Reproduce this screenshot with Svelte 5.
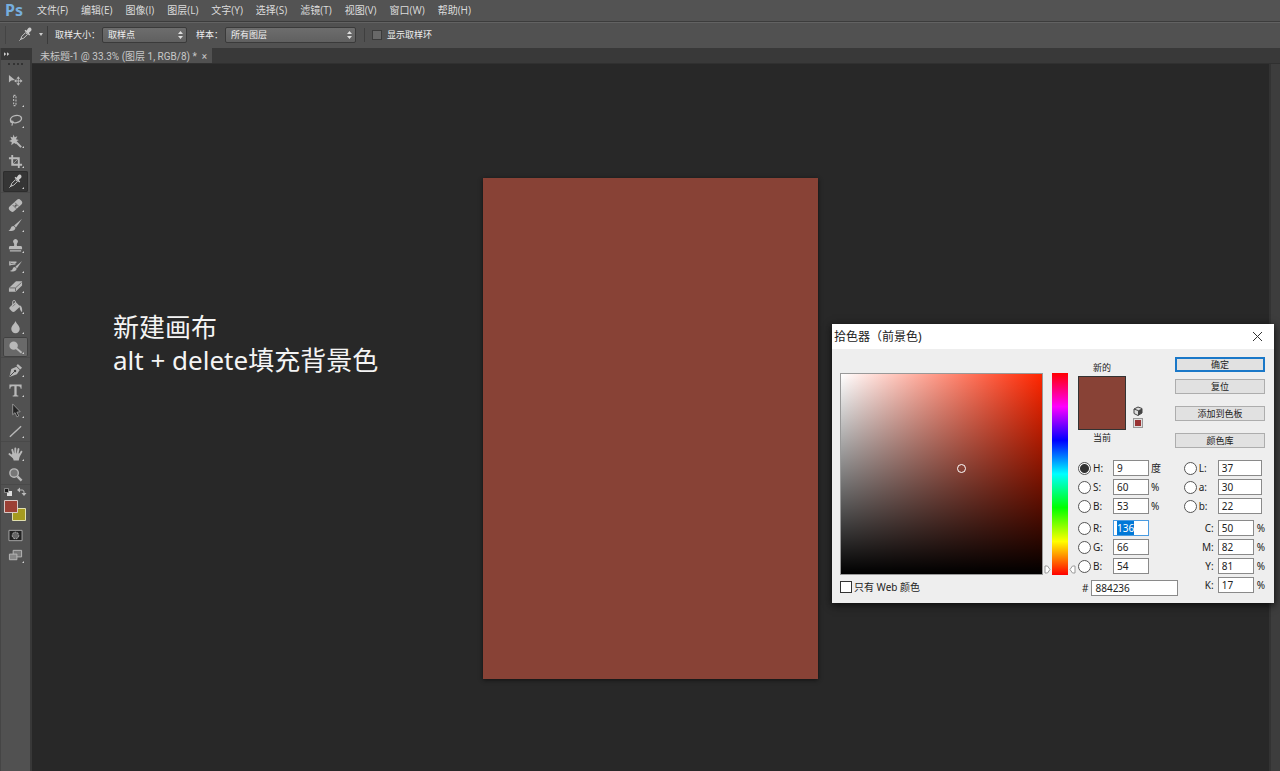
<script lang="ts">
import { onMount } from "svelte";

interface Tool {
    name: string;
    icon: string;
    more?: boolean;
    state?: "active" | "raised";
}

interface Channel {
    label: string;
    value: string;
    unit?: string;
    radio?: boolean;
}

const menus = [
    "文件(F)",
    "编辑(E)",
    "图像(I)",
    "图层(L)",
    "文字(Y)",
    "选择(S)",
    "滤镜(T)",
    "视图(V)",
    "窗口(W)",
    "帮助(H)",
];

const dropper =
    '<path d="M3 13l1-3 4-4 2 2-4 4z" fill="none" stroke="currentColor"/><path d="M1.500 14.500l2-2" stroke="currentColor"/><path d="M7 4l5 5 1-1-1.500-1.500 2.300-2.300c1-1 .7-2.500-.2-3.200-.8-.6-2-.5-2.700.3L9 4 8 3z"/>';

const groups: Tool[][] = [
    [
        {
            name: "移动工具",
            icon: '<path d="M1 2v8l2.500-2 4-.5z"/><path d="M11 5v7M7.500 8.500h7" stroke="currentColor"/><path d="M11 3.500l2 2.500H9zM11 13.500l2-2.500H9zM6.500 8.500L9 6.500v4zM15.500 8.500L13 6.500v4z"/>',
        },
        {
            name: "选框工具",
            more: true,
            icon: '<path d="M6 2.500h2.500v11H6z" fill="none" stroke="currentColor" stroke-width="1.200" stroke-dasharray="2 1.500"/>',
        },
        {
            name: "套索工具",
            more: true,
            icon: '<ellipse cx="8.500" cy="6.500" rx="6" ry="3.800" fill="none" stroke="currentColor" stroke-width="1.500" transform="rotate(-12 8.500 6.500)"/><path d="M3.500 8c-1.500 1-.5 2.500 1 2s1-1.500 0-1.500M4.500 10.500c.5 1 .5 1.500-.5 3" fill="none" stroke="currentColor" stroke-width="1.200"/>',
        },
        {
            name: "魔棒工具",
            more: true,
            icon: '<path d="M7 7l7 7" stroke="currentColor" stroke-width="2.200"/><path d="M6 .5l1 3 3-1-1.500 3 3 1-3 1.500.5 3-2.500-1.500L3.500 12l.5-3.500-3-1L4 6 2.500 3l2.500.8z"/>',
        },
        {
            name: "裁剪工具",
            more: true,
            icon: '<path d="M4.500 1v10.500H15M1 4.500h10.500V15" fill="none" stroke="currentColor" stroke-width="2"/><path d="M5 11l6-6" stroke="currentColor" stroke-width=".7"/>',
        },
        { name: "吸管工具", more: true, state: "active", icon: dropper },
    ],
    [
        {
            name: "修复画笔",
            more: true,
            icon: '<rect x="0" y="4.500" width="16" height="7" rx="3" transform="rotate(-42 8 8)"/><path d="M5 7.500l4 4M7.500 5l4 4" stroke="#666"/><path d="M8.200 7v2.500M7 8.200h2.500" stroke="#555"/>',
        },
        {
            name: "画笔工具",
            more: true,
            icon: '<path d="M15 .8L6.500 8l2 2.200z"/><path d="M6 8.500c-2 0-2.500 1-3 2.200C2.500 12.500 1.500 13 .5 13.500c3.500 1 7 .5 7.500-3z"/>',
        },
        {
            name: "仿制图章",
            more: true,
            icon: '<path d="M8 1a2.700 2.700 0 0 0-2 4.400c.6.800.8 1.600.4 3.100H3c-1 0-2 .5-2 1.500V12h14v-2c0-1-1-1.500-2-1.500H9.600c-.4-1.500-.2-2.300.4-3.100A2.700 2.700 0 0 0 8 1zM2 13h12v1.500H2z"/>',
        },
        {
            name: "历史记录画笔",
            more: true,
            icon: '<path d="M15 2L8 8l1.500 2z"/><path d="M7.500 8.500c-2 0-2 1-2.500 2-.5 1.500-1.500 2-3 2.200 3.500 1.300 6.500.8 7.300-2.200z"/><path d="M3 3.500h6M2 6l6-1M2 2.500v4.500" fill="none" stroke="currentColor" stroke-width="1.500"/>',
        },
        {
            name: "橡皮擦",
            more: true,
            icon: '<path d="M1 9.500L8.500 2.500H15V7l-7 6.500H1z"/><path d="M1.500 9.500H8V13M8 9.500L14.500 3.500" fill="none" stroke="#666"/>',
        },
        {
            name: "油漆桶",
            more: true,
            icon: '<path d="M2 8.500L8 3l5 5-5.500 5c-1 1-2.500 1-3.500 0l-2-2c-.8-.8-.7-1.800 0-2.500z"/><path d="M5 7V3c0-2 3-2 3 0v4" fill="none" stroke="currentColor"/><path d="M12 7c2 0 3.500 2 3 7-2-1-2.500-4-3-7z"/><path d="M5 8l3-3" stroke="#777"/>',
        },
        {
            name: "模糊工具",
            more: true,
            icon: '<path d="M8 1c1 3 4.500 5 4.500 8.500a4.500 4.500 0 0 1-9 0C3.500 6 7 4 8 1z"/>',
        },
        {
            name: "减淡工具",
            more: true,
            state: "raised",
            icon: '<circle cx="6" cy="6" r="4.500"/><path d="M8.500 8.500L14.500 13.500" stroke="currentColor" stroke-width="2"/>',
        },
    ],
    [
        {
            name: "钢笔工具",
            more: true,
            icon: '<path d="M1.500 15l2-8.500L9 4l3.500 3.500L9.500 12z"/><path d="M9 3l1.500-2L15 5l-2 2z"/><path d="M2 14l5-5" stroke="#444"/><circle cx="7.500" cy="8.500" r="1.300" fill="#444"/>',
        },
        {
            name: "文字工具",
            more: true,
            icon: '<path d="M1.500 1.500h13V6h-1c-.2-1.800-.8-2.500-2.500-2.500H9.200V12c0 1 .5 1.300 1.800 1.300v1.200H5v-1.200c1.300 0 1.800-.3 1.800-1.300V3.500H5C3.300 3.500 2.700 4.200 2.500 6h-1z"/>',
        },
        {
            name: "路径选择",
            more: true,
            icon: '<path d="M5 1v11.500l2.500-2.200 2 4.500 2-1-2-4 3.500-.5z" fill="#242424" stroke="#aaa" stroke-width=".8"/>',
        },
        {
            name: "直线工具",
            more: true,
            icon: '<path d="M2 13.500L14 2.500" stroke="currentColor" stroke-width="1.500"/>',
        },
    ],
    [
        {
            name: "抓手工具",
            more: true,
            icon: '<path d="M1.500 7.500L5 10.500M4.500 3l1.500 5M7.800 1.500V8M11.200 2.200L10 8M14.300 5L12 9" fill="none" stroke="currentColor" stroke-width="2" stroke-linecap="round"/><path d="M4.500 7h8.500c0 3-1 4-1.500 7.500h-5.500c0-2-1.500-3.500-3-5.500z"/>',
        },
        {
            name: "缩放工具",
            icon: '<circle cx="6.500" cy="6.500" r="4.500" fill="#777" stroke="currentColor" stroke-width="1.500"/><path d="M10 10l4.500 4.500" stroke="currentColor" stroke-width="2.500"/>',
        },
    ],
];

const hsb: Channel[] = [
    { label: "H:", value: "9", unit: "度", radio: true },
    { label: "S:", value: "60", unit: "%", radio: true },
    { label: "B:", value: "53", unit: "%", radio: true },
];
const rgb: Channel[] = [
    { label: "R:", value: "136", radio: true },
    { label: "G:", value: "66", radio: true },
    { label: "B:", value: "54", radio: true },
];
const lab: Channel[] = [
    { label: "L:", value: "37", radio: true },
    { label: "a:", value: "30", radio: true },
    { label: "b:", value: "22", radio: true },
];
const cmyk: Channel[] = [
    { label: "C:", value: "50", unit: "%" },
    { label: "M:", value: "82", unit: "%" },
    { label: "Y:", value: "81", unit: "%" },
    { label: "K:", value: "17", unit: "%" },
];

onMount(() => {
    const red = document.getElementById("rgb-0") as HTMLInputElement;
    red.focus();
    red.select();
});
</script>

{#snippet arrows()}
    <svg class="arrows" viewBox="0 0 5 8" width="5" height="8">
        <path d="M0 3l2.500-3L5 3zM0 5l2.500 3L5 5z" fill="#ddd" />
    </svg>
{/snippet}

{#snippet channels(id: string, list: Channel[])}
    <div class={["channels", id]}>
        {#each list as channel, i}
            <div class="channel">
                {#if channel.radio}
                    <input
                        type="radio"
                        name="channel"
                        aria-label={`${id} ${channel.label}`}
                        checked={id === "hsb" && i === 0}
                    />
                {/if}
                <label for={`${id}-${i}`}>{channel.label}</label>
                <input type="text" id={`${id}-${i}`} value={channel.value} />
                {#if channel.unit}
                    <span class="unit">{channel.unit}</span>
                {/if}
            </div>
        {/each}
    </div>
{/snippet}

<div class="app">
    <nav class="menubar">
        <span class="logo">Ps</span>
        {#each menus as menu}
            <button class="menu">{menu}</button>
        {/each}
    </nav>

    <div class="options">
        <button class="current-tool" aria-label="吸管工具">
            <svg viewBox="0 0 16 16" width="15" height="15">{@html dropper}</svg>
            <svg viewBox="0 0 4 3" width="4" height="3"><path d="M0 0h4L2 3z" /></svg>
        </button>
        <label for="sample-size">取样大小：</label>
        <div class="select size">
            <select id="sample-size"><option>取样点</option></select>
            {@render arrows()}
        </div>
        <label class="spaced" for="sample">样本：</label>
        <div class="select layers">
            <select id="sample"><option>所有图层</option></select>
            {@render arrows()}
        </div>
        <label class="ring">
            <input type="checkbox" />
            显示取样环
        </label>
    </div>

    <div class="main">
        <aside class="toolbox">
            <button class="expand" aria-label="展开面板">
                <svg viewBox="0 0 8 5" width="6" height="4">
                    <path d="M0 0l3 2.500L0 5zM4 0l3 2.500L4 5z" />
                </svg>
            </button>
            <div class="grip"></div>
            {#each groups as tools}
                <div class="group">
                    {#each tools as tool}
                        <button class={["tool", tool.state]} aria-label={tool.name}>
                            <svg viewBox="0 0 16 16" width="15" height="15">{@html tool.icon}</svg>
                            {#if tool.more}<i class="more"></i>{/if}
                        </button>
                    {/each}
                </div>
            {/each}
            <div class="swatches">
                <svg viewBox="0 0 24 38" width="24" height="38">
                    <path d="M4 4h5v5H4z" fill="#ddd" />
                    <path d="M1.500 1.500h4v4h-4z" fill="#1b1b1b" stroke="#aaa" stroke-width=".7" />
                    <path d="M16 3h3c2 0 2 1 2 4" fill="none" stroke="#bbb" />
                    <path d="M14 3l3-2.500v5zM21 9l-2.500-3h5z" fill="#bbb" />
                    <path d="M9.500 21.500h13v12h-13z" fill="#a59a20" stroke="#e0dfb0" />
                    <path d="M1.500 13.500h13v12h-13z" fill="#9c4035" stroke="#d8c8c5" />
                </svg>
            </div>
            <button class="tool mode" aria-label="快速蒙版">
                <svg viewBox="0 0 16 16" width="15" height="15">
                    <path d="M1 2.500h14v11H1z" fill="#222" stroke="#aaa" />
                    <circle cx="8" cy="8" r="3.500" fill="#666" stroke="#bbb" stroke-dasharray="2 1" />
                </svg>
            </button>
            <button class="tool mode" aria-label="屏幕模式">
                <svg viewBox="0 0 16 16" width="15" height="15">
                    <path d="M5.500 2.500h9v7h-9z" fill="#777" stroke="currentColor" />
                    <path d="M1.500 6.500h8v6h-8z" fill="#888" stroke="currentColor" />
                </svg>
                <i class="more"></i>
            </button>
        </aside>

        <section class="document">
            <div class="tabs">
                <div class="tab">
                    <span>未标题-1 @ 33.3% (图层 1, RGB/8) *</span>
                    <button aria-label="关闭">×</button>
                </div>
            </div>
            <div class="stage">
                <div class="canvas">
                    <p class="note">新建画布<br />alt + delete填充背景色</p>
                    <div class="artboard"></div>
                </div>
                <div class="scroll"></div>
            </div>
        </section>
    </div>

    <form class="dialog" aria-label="拾色器">
        <header>
            <h1>拾色器（前景色)</h1>
            <button type="button" aria-label="关闭">
                <svg viewBox="0 0 11 11" width="11" height="11">
                    <path d="M1 1l9 9M10 1l-9 9" stroke="#333" />
                </svg>
            </button>
        </header>
        <div class="picker">
            <div class="left">
                <div class="spectrum">
                    <div class="field"><span class="marker"></span></div>
                    <svg class="thumb" viewBox="0 0 7 10" width="7" height="10">
                        <path d="M1 1h2.500l2.500 3.500L3.500 8H1z" />
                    </svg>
                    <div class="hue"></div>
                    <svg class="thumb" viewBox="0 0 7 10" width="7" height="10">
                        <path d="M6 1H3.500L1 4.500 3.500 8H6z" />
                    </svg>
                </div>
                <label class="web">
                    <input type="checkbox" />
                    只有 Web 颜色
                </label>
            </div>
            <div class="right">
                <div class="top">
                    <div class="compare">
                        <span>新的</span>
                        <div class="preview"></div>
                        <span>当前</span>
                    </div>
                    <div class="warn">
                        <svg viewBox="0 0 10 10" width="10" height="10">
                            <path d="M1 3l4-2 4 1.500v4.500L5 9.500 1 7.500z" fill="#ddd" stroke="#444" />
                            <path d="M5 4.500l4-2v4.500L5 9.500z" fill="#444" />
                            <path d="M1 3l4 1.500" stroke="#444" />
                        </svg>
                        <div class="safe"></div>
                    </div>
                    <div class="actions">
                        <button type="button" class="primary">确定</button>
                        <button type="button">复位</button>
                        <button type="button" class="apart">添加到色板</button>
                        <button type="button" class="apart">颜色库</button>
                    </div>
                </div>
                <div class="values">
                    <div>
                        {@render channels("hsb", hsb)}
                        {@render channels("rgb", rgb)}
                        <div class="hex">
                            <label for="hex">#</label>
                            <input type="text" id="hex" value="884236" />
                        </div>
                    </div>
                    <div>
                        {@render channels("lab", lab)}
                        {@render channels("cmyk", cmyk)}
                    </div>
                </div>
            </div>
        </div>
    </form>
</div>

<style>
:global(body) {
    background: #282828;
}

.app {
    position: relative;
    display: flex;
    flex-direction: column;
    min-height: 100vh;
    overflow: hidden;
    color: #ddd;
    font: 10px/14px "Open Sans", "Noto Sans CJK SC", sans-serif;
}

.app * {
    box-sizing: border-box;
}

button,
input,
select {
    margin: 0;
    padding: 0;
    border: 0;
    background: none;
    color: inherit;
    font: inherit;
}

svg {
    display: block;
    fill: currentColor;
}

.menubar {
    display: flex;
    align-items: center;
    gap: 13px;
    height: 22px;
    padding: 0 0 2px 5px;
    background: #535353;
    border-bottom: 1px solid #3c3c3c;
}

.logo {
    width: 19px;
    color: #76aede;
    font: bold 16px/20px "Noto Sans", sans-serif;
}

.menu {
    white-space: nowrap;
}

.options {
    display: flex;
    align-items: center;
    height: 26px;
    padding: 0 0 2px 5px;
    background: #515151;
    border-top: 1px solid #626262;
    color: #eee;
    font-size: 9px;
}

.current-tool {
    display: flex;
    align-items: center;
    gap: 6px;
    width: 43px;
    height: 18px;
    margin-right: 7px;
    padding-left: 12px;
    border-left: 1px solid #444;
    border-right: 1px solid #3b3b3b;
    color: #ccc;
}

.select {
    position: relative;
    height: 16px;
    margin-left: 2px;
    border: 1px solid #3a3a3a;
    border-radius: 2px;
    background: linear-gradient(#6d6d6d, #606060);
}

.select select {
    display: block;
    width: 100%;
    height: 14px;
    padding-left: 5px;
    appearance: none;
    color: #eee;
}

.size {
    width: 85px;
}

.layers {
    width: 131px;
}

.arrows {
    position: absolute;
    top: 3px;
    right: 3px;
    pointer-events: none;
}

.spaced {
    margin-left: 9px;
}

.ring {
    display: flex;
    align-items: center;
    gap: 5px;
    margin-left: 8px;
    padding-left: 7px;
    border-left: 1px solid #3f3f3f;
}

.ring input {
    width: 10px;
    height: 10px;
    appearance: none;
    border: 1px solid #3b3b3b;
    background: #686868;
}

.main {
    display: flex;
    flex: 1;
}

.toolbox {
    width: 32px;
    background: #515151;
    border-left: 1px solid #454545;
    border-right: 2px solid #383838;
}

.expand {
    display: block;
    width: 100%;
    height: 12px;
    padding-left: 3px;
    background: #373737;
    color: #ccc;
}

.grip {
    height: 4px;
    margin: 1px 7px 5px;
    border-bottom: 2px dotted #333;
}

.group {
    display: flex;
    flex-direction: column;
    margin-bottom: 2px;
    padding-left: 2px;
    border-bottom: 1px solid #494949;
}

.tool {
    position: relative;
    display: grid;
    place-items: center;
    width: 25px;
    height: 20px;
    border-radius: 2px;
    color: #b9b9b9;
}

.tool:nth-child(3n) {
    height: 21px;
}

.active {
    background: #353535;
    box-shadow: 0 0 0 1px #2d2d2d inset;
    color: #ccc;
}

.raised {
    background: #696969;
    box-shadow: 0 0 0 1px #414141 inset;
}

.more {
    position: absolute;
    right: 4px;
    bottom: 3px;
    border: 1px solid #d0d0d0;
    border-top-color: transparent;
    border-left-color: transparent;
}

.swatches {
    padding: 0 2px;
}

.mode {
    margin-left: 2px;
}

.document {
    display: flex;
    flex: 1;
    flex-direction: column;
}

.tabs {
    display: flex;
    height: 16px;
    background: #393939;
    border-bottom: 1px solid #303030;
}

.tab {
    display: flex;
    align-items: center;
    gap: 5px;
    padding: 2px 5px 0 8px;
    background: #515151;
    color: #c8c8c8;
    font-family: Roboto, "Noto Sans CJK SC", sans-serif;
    white-space: nowrap;
}

.stage {
    display: flex;
    flex: 1;
}

.canvas {
    position: relative;
    flex: 1;
    background: #282828;
}

.note {
    position: absolute;
    top: 247px;
    left: 81px;
    margin: 0;
    color: #f4f4f4;
    font: 26px/33px "Noto Sans", "Noto Sans CJK SC", sans-serif;
    white-space: nowrap;
}

.artboard {
    position: absolute;
    top: 114px;
    left: 451px;
    width: 335px;
    height: 501px;
    background: #884236;
    box-shadow: 0 1px 4px #111;
}

.scroll {
    width: 11px;
    background: #3d3d3d;
    border-left: 2px solid #333;
}

.dialog {
    position: absolute;
    top: 324px;
    right: 6px;
    width: 442px;
    background: #eee;
    box-shadow: 0 2px 8px #0b0b0b;
    color: #222;
    font-family: "Noto Sans", "Noto Sans CJK SC", sans-serif;
}

.dialog header {
    display: flex;
    align-items: center;
    justify-content: space-between;
    height: 25px;
    padding: 0 11px 0 2px;
    background: #fff;
}

h1 {
    margin: 0;
    font: 12px/20px "Noto Sans", "Noto Sans CJK SC", sans-serif;
}

.picker {
    display: flex;
    justify-content: space-between;
    padding: 8px 9px 4px 8px;
}

.left {
    padding-top: 16px;
}

.spectrum {
    display: flex;
    align-items: flex-end;
    gap: 1px;
    height: 202px;
}

.field {
    position: relative;
    width: 203px;
    height: 100%;
    border: 1px solid #999;
    background:
        linear-gradient(transparent, #000),
        linear-gradient(to right, #fff, #ff2600);
}

.marker {
    position: absolute;
    top: 90px;
    left: 116px;
    width: 9px;
    height: 9px;
    border: 1px solid #fff;
    border-radius: 50%;
}

.thumb {
    fill: #fff;
    stroke: #999;
}

.hue {
    width: 16px;
    height: 100%;
    background: linear-gradient(#f00, #f0f, #00f, #0ff, #0f0, #ff0, #f00);
}

.web {
    display: flex;
    align-items: center;
    gap: 2px;
    margin-top: 5px;
}

.web input {
    width: 12px;
    height: 12px;
    appearance: none;
    border: 1px solid #333;
    background: #fff;
}

.right {
    width: 187px;
}

.top {
    display: flex;
    height: 103px;
    font-size: 9px;
}

.compare {
    display: flex;
    flex-direction: column;
    align-items: center;
    padding-top: 4px;
}

.preview {
    width: 48px;
    height: 54px;
    margin: 1px 0;
    border: 1px solid #333;
    background: #884236;
}

.warn {
    display: flex;
    flex-direction: column;
    gap: 2px;
    margin: 49px 0 0 7px;
}

.safe {
    width: 10px;
    height: 10px;
    border: 1px solid #999;
    outline: 1px solid #ddd;
    outline-offset: -2px;
    background: #933;
}

.actions {
    flex: 1;
    margin-left: 32px;
}

.actions button {
    display: block;
    width: 100%;
    height: 15px;
    margin-bottom: 7px;
    padding-top: 1px;
    border: 1px solid #adadad;
    background: #e1e1e1;
    line-height: 12px;
}

.actions .primary {
    border: 2px solid #1a78c8;
    line-height: 10px;
}

.actions .apart {
    margin: 12px 0;
}

.values {
    display: flex;
    justify-content: space-between;
}

.channels {
    display: grid;
    gap: 3px;
    margin-bottom: 6px;
}

.channel {
    display: flex;
    align-items: center;
    height: 16px;
}

.channel label {
    width: 20px;
    margin-left: 2px;
}

input[type="radio"] {
    width: 13px;
    height: 13px;
    appearance: none;
    border: 1px solid #555;
    border-radius: 50%;
    background: #fff;
}

input[type="radio"]:checked {
    background: radial-gradient(#333 4px, #fff 5px);
}

input[type="text"] {
    width: 36px;
    height: 16px;
    padding: 0 3px;
    border: 1px solid #8a8a8a;
    background: #fff;
}

input[type="text"]:focus {
    border-color: #4a9be0;
    outline: none;
}

input::selection {
    background: #0078d7;
    color: #fff;
}

.unit {
    margin-left: 2px;
}

.lab .channel input[type="text"] {
    width: 44px;
}

.lab .channel {
    padding-left: 1px;
}

.lab .channel label {
    width: 19px;
}

.cmyk .channel label {
    width: 31px;
    margin-right: 4px;
    margin-left: 0;
    text-align: right;
}

.cmyk .unit {
    margin-left: 3px;
}

.hex {
    display: flex;
    align-items: center;
    gap: 3px;
    margin-left: 4px;
}

.hex input[type="text"] {
    width: 87px;
}
</style>
